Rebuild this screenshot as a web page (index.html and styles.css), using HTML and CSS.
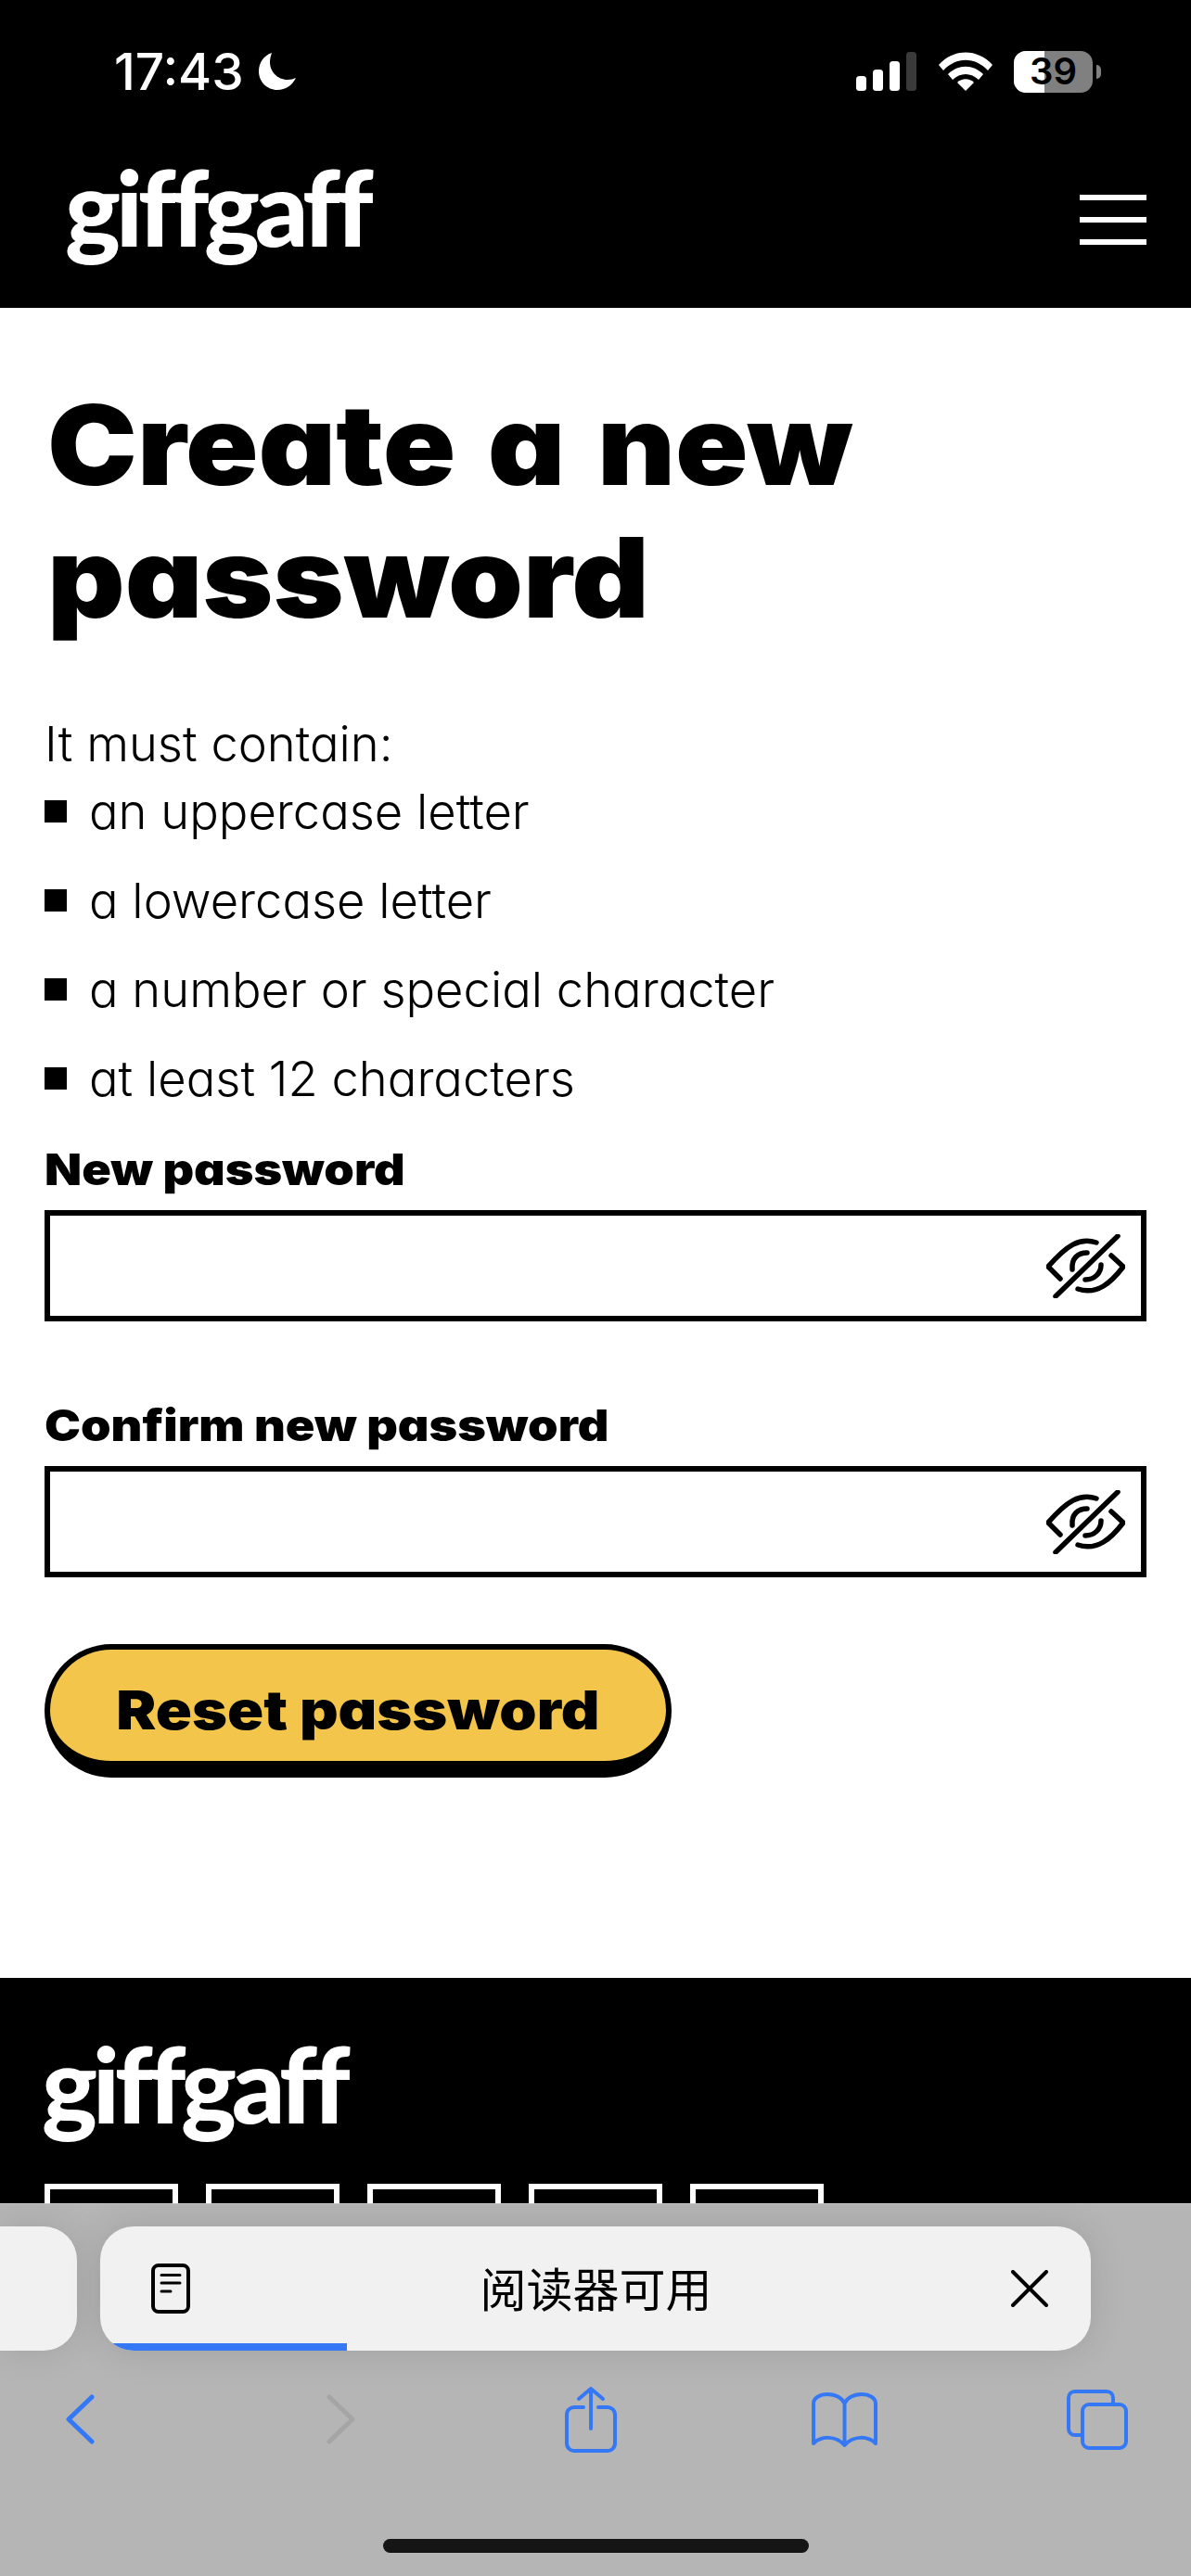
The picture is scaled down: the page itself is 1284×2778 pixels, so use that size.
FILE: index.html
```html
<!DOCTYPE html>
<html lang="en">

<head>
    <meta charset="utf-8">
    <meta name="viewport" content="width=device-width, initial-scale=1">
    <title>giffgaff - Create a new password</title>
    <link rel="stylesheet" href="styles.css">
</head>

<body>
    <header class="top">
        <div class="status">
            <div class="status-left">
                <span class="clock">17:43</span>
                <svg class="moon" viewBox="0 0 42 42"><path d="M15 1C6 4 1 12 1 21c0 11 9 20 20 20 9 0 16-5 20-13-3 1-5 2-9 2C21 30 13 21 13 11c0-4 1-7 2-10z" fill="#fff"/></svg>
            </div>
            <div class="status-right">
                <svg class="signal" viewBox="0 0 66 42">
                    <rect x="0" y="26" width="11" height="16" rx="3.5" fill="#fff"/>
                    <rect x="18" y="19" width="11" height="23" rx="3.5" fill="#fff"/>
                    <rect x="36" y="10" width="11" height="32" rx="3.5" fill="#fff"/>
                    <rect x="54" y="0" width="11" height="42" rx="3.5" fill="#3a3a3a"/>
                </svg>
                <svg class="wifi" viewBox="0 0 58 42">
                    <path d="M0 14C16-4 42-4 58 14l-5 6C39 5 19 5 5 20z" fill="#fff"/>
                    <path d="M10 24c11-11 27-11 38 0l-5 6c-8-8-20-8-28 0z" fill="#fff"/>
                    <path d="M20 33c5-5 13-5 18 0l-9 9z" fill="#fff"/>
                </svg>
                <div class="battery">
                    <div class="battery-body"><span class="battery-level"></span><span class="battery-num">39</span></div>
                    <span class="battery-tip"></span>
                </div>
            </div>
        </div>
        <div class="nav">
            <span class="logo">giffgaff</span>
            <div class="burger"><span></span><span></span><span></span></div>
        </div>
    </header>

    <main class="content">
        <h1>Create a new password</h1>
        <p class="intro">It must contain:</p>
        <ul class="rules">
            <li>an uppercase letter</li>
            <li>a lowercase letter</li>
            <li>a number or special character</li>
            <li>at least 12 characters</li>
        </ul>
        <label class="field-label">New password</label>
        <div class="field">
            <svg class="eye" viewBox="0 0 85 69"><use href="#eye-off"/></svg>
        </div>
        <label class="field-label second">Confirm new password</label>
        <div class="field">
            <svg class="eye" viewBox="0 0 85 69"><use href="#eye-off"/></svg>
        </div>
        <button class="reset"><span>Reset password</span></button>
    </main>

    <footer class="bottom">
        <span class="logo logo-small">giffgaff</span>
        <div class="socials"><span></span><span></span><span></span><span></span><span></span></div>
    </footer>

    <div class="safari">
        <div class="tabs">
            <div class="tab-prev"></div>
            <div class="tab">
                <svg class="reader" viewBox="0 0 42 54" fill="none" stroke="#000">
                    <rect x="2" y="2" width="38" height="50" rx="6" stroke-width="4"/>
                    <path d="M11 12.500h20M11 21h20M11 30h10" stroke-width="3" stroke-linecap="round"/>
                </svg>
                <span class="tab-title">阅读器可用</span>
                <svg class="close" viewBox="0 0 40 40" fill="none" stroke="#000" stroke-width="4" stroke-linecap="round"><path d="M2 2l36 36M38 2L2 38"/></svg>
                <span class="progress"></span>
            </div>
        </div>
        <div class="tools">
            <svg class="back" viewBox="0 0 31 54" fill="none" stroke="#3478f6" stroke-width="5" stroke-linecap="round" stroke-linejoin="round"><path d="M28 3L3 27l25 24"/></svg>
            <svg class="forward" viewBox="0 0 31 54" fill="none" stroke="#a5a5a5" stroke-width="5" stroke-linecap="round" stroke-linejoin="round"><path d="M3 3l25 24L3 51"/></svg>
            <svg class="share" viewBox="0 0 56 72" fill="none" stroke="#3478f6" stroke-width="4" stroke-linecap="round" stroke-linejoin="round"><path d="M20 23H10c-4 0-8 3-8 8v31c0 5 4 8 8 8h36c4 0 8-3 8-8V31c0-5-4-8-8-8H36M28 46V3M15 14L28 3l13 11"/></svg>
            <svg class="book" viewBox="0 0 71 59" fill="none" stroke="#3478f6" stroke-width="4" stroke-linecap="round" stroke-linejoin="round"><path d="M35.500 12C33 6 26 2 17 2 9 2 2 6 2 12v43c8-8 24-9 33.500 2 9.500-11 25.500-10 33.500-2V12c0-6-7-10-15-10-9 0-16 4-18.500 10zM35.500 12v45"/></svg>
            <svg class="pages" viewBox="0 0 66 65" fill="none" stroke="#3478f6" stroke-width="4" stroke-linejoin="round"><path d="M16 49H9c-4 0-7-3-7-7V9c0-4 3-7 7-7h34c4 0 7 3 7 7v6"/><rect x="17" y="16" width="47" height="47" rx="7"/></svg>
        </div>
        <div class="home-bar"></div>
    </div>

    <svg class="sprite" width="0" height="0">
        <symbol id="eye-off" viewBox="0 0 85 69">
            <g fill="none" stroke="#000" stroke-width="5.500" stroke-linecap="round" stroke-linejoin="round">
                <path d="M77 2L10 67"/>
                <path d="M54 9C36 3 22 12 2 35l13 13"/>
                <path d="M70 23l13 12C70 52 55 66 34 59"/>
                <path d="M44 20c-10 0-17 6-16 18"/>
                <path d="M59 33c0 9-7 16-17 16"/>
            </g>
        </symbol>
    </svg>
</body>

</html>
```

FILE: styles.css
```css
* {
    box-sizing: border-box;
}

html,
body {
    margin: 0;
    padding: 0;
}

body {
    width: 1284px;
    height: 2778px;
    overflow: hidden;
    display: flex;
    flex-direction: column;
    color: #000;
    background-color: #fff;
    font-family: Inter, "Noto Sans CJK SC", sans-serif;
}

.sprite {
    display: none;
}

/* black bar with the phone status and site nav */
.top {
    height: 332px;
    flex: none;
    padding: 50px 48px 0;
    color: #fff;
    background-color: #000;
}

.status {
    height: 54px;
    display: flex;
    justify-content: space-between;
    align-items: center;
}

.status-left {
    display: flex;
    align-items: center;
    gap: 15px;
    padding-left: 75px;
}

.clock {
    font-size: 55px;
    font-weight: 500;
}

.moon {
    width: 42px;
    height: 42px;
}

.status-right {
    display: flex;
    align-items: center;
    gap: 23px;
    margin-right: 49px;
}

.signal {
    width: 66px;
    height: 42px;
}

.wifi {
    width: 58px;
    height: 42px;
}

.battery {
    display: flex;
    align-items: center;
    gap: 4px;
}

.battery-body {
    position: relative;
    width: 85px;
    height: 45px;
    display: flex;
    justify-content: center;
    align-items: center;
    border-radius: 13px;
    background-color: #808080;
    color: #000;
    font-size: 40px;
    font-weight: 600;
    line-height: 1;
}

.battery-level {
    position: absolute;
    left: 0;
    top: 0;
    bottom: 0;
    width: 33px;
    border-radius: 13px 0 0 13px;
    background-color: #fff;
}

.battery-num {
    position: relative;
}

.battery-tip {
    width: 5px;
    height: 15px;
    border-radius: 0 8px 8px 0;
    background-color: #808080;
}

.nav {
    display: flex;
    justify-content: space-between;
    align-items: center;
    padding-left: 22px;
    margin-top: 69px;
}

.logo {
    padding-bottom: 30px;
    font-family: Lato, sans-serif;
    font-size: 113px;
    font-weight: 900;
    line-height: 98px;
    letter-spacing: -5.300px;
    color: #fff;
}

.burger {
    width: 72px;
    display: flex;
    flex-direction: column;
    gap: 18px;
}

.burger span {
    height: 6px;
    background-color: #fff;
}

/* form */
.content {
    height: 1801px;
    flex: none;
    padding: 76px 48px 0;
    font-weight: 300;
    font-feature-settings: "cv11";
}

h1 {
    width: 860px;
    margin: 0 0 0 3px;
    font-size: 120px;
    font-weight: 900;
    line-height: 143px;
    word-spacing: 8px;
    transform: scaleX(1.08);
    transform-origin: left center;
}

.intro {
    margin: 83px 0 0;
    font-size: 52.500px;
    line-height: 50px;
}

.rules {
    margin: 0;
    padding: 0;
    list-style: none;
}

.rules li {
    height: 96px;
    display: flex;
    align-items: center;
    gap: 24px;
    font-size: 52.500px;
}

.rules li::before {
    content: "";
    width: 24px;
    height: 24px;
    background-color: #000;
}

.field-label {
    display: block;
    width: fit-content;
    margin-top: 22px;
    font-size: 47px;
    font-weight: 900;
    line-height: 56px;
    transform: scaleX(1.11);
    transform-origin: left center;
}

.field-label.second {
    margin-top: 84px;
}

.field {
    height: 120px;
    margin-top: 16px;
    padding-right: 17px;
    display: flex;
    justify-content: flex-end;
    align-items: center;
    border: 6px solid #000;
    background-color: #fff;
}

.eye {
    width: 85px;
    height: 69px;
}

.reset {
    display: block;
    width: 676px;
    height: 144px;
    margin-top: 72px;
    padding: 10px 0 0;
    border: 6px solid #000;
    border-bottom-width: 18px;
    border-radius: 72px;
    background-color: #f4c54b;
    color: #000;
    font-family: inherit;
    font-feature-settings: inherit;
    font-size: 58px;
    font-weight: 900;
}

.reset span {
    display: inline-block;
    transform: scaleX(1.114);
}

/* footer, cut off by the browser bar */
.bottom {
    height: 243px;
    flex: none;
    overflow: hidden;
    padding: 64px 48px 0;
    background-color: #000;
}

.logo-small {
    display: block;
    height: 158px;
    padding: 0;
    margin-left: -3px;
}

.socials {
    display: flex;
    gap: 30px;
}

.socials span {
    width: 144px;
    height: 144px;
    flex: none;
    border: 6px solid #fff;
}

/* safari toolbar */
.safari {
    height: 402px;
    flex: none;
    padding-top: 24px;
    border-top: 1px solid #c8c8c8;
    background-color: #b5b5b5;
}

.tabs {
    display: flex;
    gap: 25px;
    height: 134px;
}

.tab-prev {
    width: 83px;
    border-radius: 0 36px 36px 0;
    background-color: #f1f1f1;
    box-shadow: 0 0 40px rgba(0, 0, 0, 0.1);
}

.tab {
    position: relative;
    width: 1068px;
    overflow: hidden;
    display: flex;
    align-items: center;
    padding: 0 46px 0 55px;
    border-radius: 36px;
    background-color: #f1f1f1;
    box-shadow: 0 0 40px rgba(0, 0, 0, 0.12);
}

.reader {
    width: 42px;
    height: 54px;
}

.tab-title {
    flex: 1;
    margin: 0 10px 4px 0;
    text-align: center;
    font-size: 50px;
    font-weight: 400;
}

.close {
    width: 40px;
    height: 40px;
}

.progress {
    position: absolute;
    left: 0;
    bottom: 0;
    width: 266px;
    height: 8px;
    background-color: #3478f6;
}

.tools {
    height: 108px;
    margin-top: 20px;
    padding-left: 71px;
    display: flex;
    align-items: center;
}

.back,
.forward {
    width: 31px;
    height: 54px;
}

.forward {
    margin-left: 250px;
}

.share {
    width: 56px;
    height: 72px;
    margin-left: 226px;
}

.book {
    width: 71px;
    height: 59px;
    margin-left: 210px;
}

.pages {
    width: 66px;
    height: 65px;
    margin-left: 204px;
}

.home-bar {
    width: 459px;
    height: 15px;
    margin: 75px auto 0;
    border-radius: 8px;
    background-color: #151515;
}
```
